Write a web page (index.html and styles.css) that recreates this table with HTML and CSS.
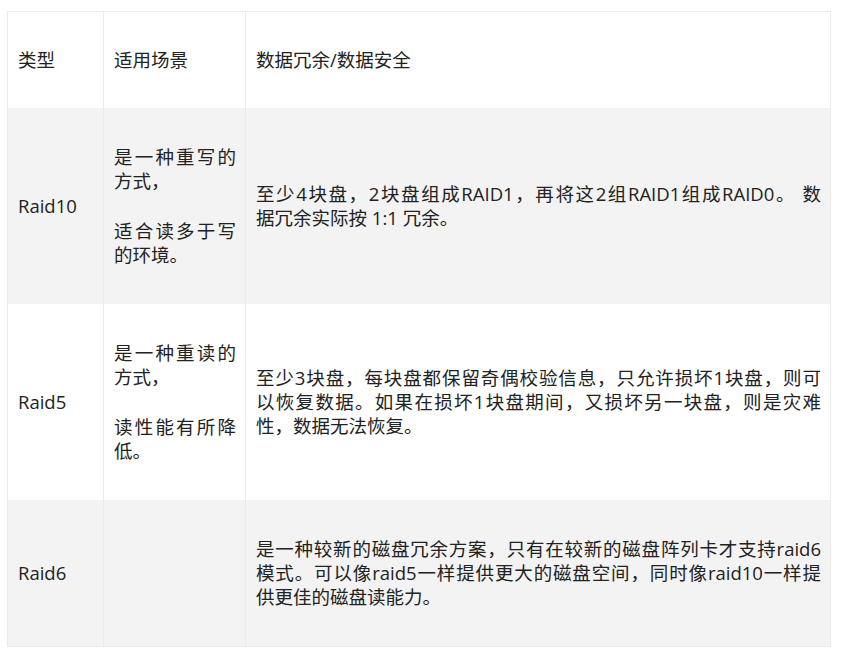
FILE: index.html
```html
<!DOCTYPE html>
<html lang="zh-CN">
  <head>
    <meta charset="UTF-8" />
    <meta name="viewport" content="width=device-width, initial-scale=1.0" />
    <title>RAID 对比</title>
    <link rel="stylesheet" href="styles.css">
  </head>
  <body>
    <table class="raid">
      <colgroup>
        <col class="c_type" />
        <col class="c_scene" />
        <col class="c_safe" />
      </colgroup>
      <thead>
        <tr>
          <th>类型</th>
          <th>适用场景</th>
          <th>数据冗余/数据安全</th>
        </tr>
      </thead>
      <tbody>
        <tr>
          <td>Raid10</td>
          <td class="scene">
            <p>是一种重写的方式，</p>
            <p>适合读多于写的环境。</p>
          </td>
          <td class="desc"><span class="ln">至少4块盘，2块盘组成RAID1，再将这2组RAID1组成RAID0。 数</span>据冗余实际按 1:1 冗余。</td>
        </tr>
        <tr>
          <td>Raid5</td>
          <td class="scene">
            <p>是一种重读的方式，</p>
            <p>读性能有所降低。</p>
          </td>
          <td class="desc"><span class="ln">至少3块盘，每块盘都保留奇偶校验信息，只允许损坏1块盘，则可</span><span class="ln">以恢复数据。如果在损坏1块盘期间，又损坏另一块盘，则是灾难</span>性，数据无法恢复。</td>
        </tr>
        <tr>
          <td>Raid6</td>
          <td class="scene"></td>
          <td class="desc"><span class="ln">是一种较新的磁盘冗余方案，只有在较新的磁盘阵列卡才支持raid6</span><span class="ln">模式。可以像raid5一样提供更大的磁盘空间，同时像raid10一样提</span>供更佳的磁盘读能力。</td>
        </tr>
      </tbody>
    </table>
  </body>
</html>
```

FILE: styles.css
```css
* {
  margin: 0;
  padding: 0;
  box-sizing: border-box;
}
body {
  margin: 11px 0 0 7px;
  background-color: white;
  font-family: "Open Sans", "Noto Sans CJK SC", sans-serif;
  font-size: 18.5px;
  line-height: 24px;
  color: #222;
}
.raid {
  width: 824px;
  table-layout: fixed;
  border-collapse: collapse;
  border: 1px solid #ebebeb;
}
.c_type {
  width: 96px;
}
.c_scene {
  width: 142px;
}
th,
td {
  border-left: 1px solid #ebebeb;
  border-right: 1px solid #ebebeb;
  padding: 37px 9px 37px 10px;
  text-align: left;
  font-weight: normal;
  vertical-align: middle;
}
th {
  padding: 36px 9px 36px 10px;
}
tbody tr:nth-child(odd) {
  background-color: #f3f3f3;
}
.scene {
  text-align: justify;
}
.scene p + p {
  margin-top: 26px;
}
.desc {
  text-align: justify;
}
.ln {
  display: block;
  text-align-last: justify;
}
```
